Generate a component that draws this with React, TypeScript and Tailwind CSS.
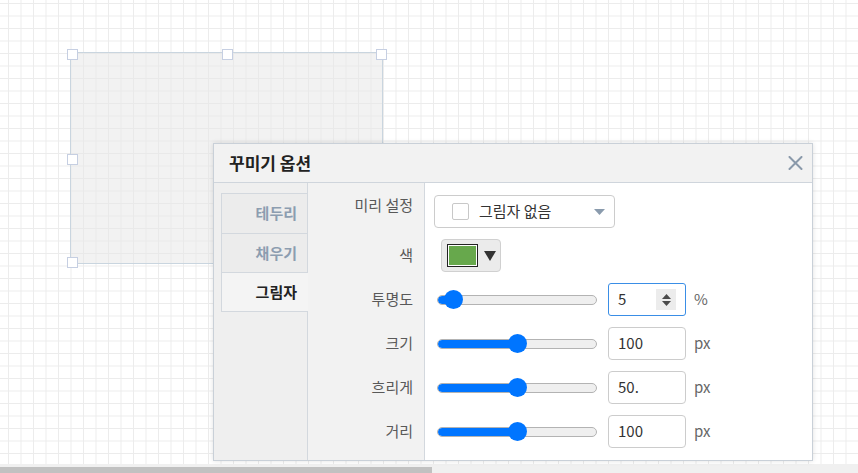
import React from "react";

const FONT = "font-['Noto_Sans_CJK_KR','Noto_Sans',sans-serif]";

function Slider({ pos }: { pos: number }) {
  return (
    <div className="relative ml-[12px] h-[33px] w-[160px] flex items-center">
      <div className="relative h-[10px] w-full rounded-full border border-[#b3b3b3] bg-[#efefef] overflow-hidden">
        <div className="h-full rounded-l-full bg-[#0075ff]" style={{ width: pos }} />
      </div>
      <div
        className="absolute top-[7px] h-[19px] w-[19px] rounded-full bg-[#0075ff]"
        style={{ left: pos - 9.5 }}
      />
    </div>
  );
}

function NumInput({ value, unit, focused }: { value: string; unit: string; focused?: boolean }) {
  return (
    <div className="flex items-center">
      <div
        className={
          focused
            ? "ml-[11px] flex h-[33px] w-[78px] items-center rounded-[3px] border border-[#3a8ee6] pl-[9px] pr-[9px]"
            : "ml-[11px] flex h-[33px] w-[78px] items-center rounded-[4px] border border-[#cccccc] pl-[9px] pr-[9px]"
        }
      >
        <span className="text-[15px] text-[#333]">{value}</span>
        {focused && (
          <div className="ml-auto flex h-[21px] w-[20px] flex-col items-center justify-center gap-[2px] bg-[#ececec]">
            <svg width="9" height="5" viewBox="0 0 9 5">
              <polygon points="0,5 4.5,0 9,5" fill="#4a4a4a" />
            </svg>
            <svg width="9" height="5" viewBox="0 0 9 5">
              <polygon points="0,0 9,0 4.5,5" fill="#4a4a4a" />
            </svg>
          </div>
        )}
      </div>
      <span className="ml-[8px] text-[15px] text-[#666]">{unit}</span>
    </div>
  );
}

export default function App() {
  const labels = ["미리 설정", "색", "투명도", "크기", "흐리게", "거리"];
  return (
    <div
      className={`${FONT} relative flex h-[473px] w-[858px] flex-col overflow-hidden bg-white`}
    >
      <div className="relative flex-1 [background-image:linear-gradient(to_right,#ececec_1px,transparent_1px),linear-gradient(to_bottom,#ececec_1px,transparent_1px)] [background-size:12.5px_12.5px] [background-position:8px_3px]">
        {/* shape */}
        <div className="absolute left-[70px] top-[52px] h-[212px] w-[313px] border border-[#c9d5df] bg-[rgba(232,232,232,0.55)]" />
        {[
          [72, 54],
          [227, 54],
          [381, 54],
          [72, 159],
          [72, 262],
        ].map(([x, y], i) => (
          <div
            key={i}
            className="absolute h-[11px] w-[11px] border border-[#c6cfe2] bg-white"
            style={{ left: x - 5.5, top: y - 5.5 }}
          />
        ))}

        {/* dialog */}
        <div className="absolute left-[213px] top-[143px] flex h-[318px] w-[600px] flex-col border border-[#c9d0d8] bg-white shadow-[0_0_5px_rgba(0,0,0,0.12)]">
          <div className="flex h-[39px] shrink-0 items-center border-b border-[#cfd5dc] bg-[#f2f2f2] pl-[15px] pr-[9px]">
            <span className="text-[17px] font-bold text-[#222]">꾸미기 옵션</span>
            <svg className="ml-auto" width="15" height="14" viewBox="0 0 15 14">
              <path d="M1.5 1 L13.5 13 M13.5 1 L1.5 13" stroke="#8a99aa" strokeWidth="2" strokeLinecap="round" />
            </svg>
          </div>
          <div className="flex flex-1">
            {/* tabs */}
            <div className="w-[93px] shrink-0 bg-[#efefef] pl-[7px] pt-[10px]">
              <div className="flex h-[40px] w-[86px] items-center justify-end border-l border-t border-[#d3d8de] bg-[#ececec] pr-[10px] text-[15px] font-bold text-[#8c9db0]">
                테두리
              </div>
              <div className="flex h-[39px] w-[86px] items-center justify-end border-l border-t border-[#d3d8de] bg-[#ececec] pr-[10px] text-[15px] font-bold text-[#8c9db0]">
                채우기
              </div>
              <div className="relative z-10 flex h-[40px] w-[87px] items-center justify-end border-b border-l border-t border-[#d3d8de] bg-[#f4f4f4] pr-[11px] text-[15px] font-bold text-[#222]">
                그림자
              </div>
            </div>
            {/* labels */}
            <div className="flex w-[118px] shrink-0 flex-col gap-[11px] border-l border-r border-[#d3d8de] bg-[#f2f2f2] pr-[11px] pt-[12px]">
              {labels.map((l, i) => (
                <div
                  key={l}
                  className={
                    i === 0
                      ? "flex h-[33px] items-start justify-end text-[15px] leading-[20px] text-[#595959]"
                      : "flex h-[33px] items-center justify-end text-[15px] text-[#595959]"
                  }
                >
                  {l}
                </div>
              ))}
            </div>
            {/* controls */}
            <div className="flex flex-1 flex-col gap-[11px] pt-[12px]">
              <div className="flex h-[33px]">
                <div className="ml-[9px] flex h-[33px] w-[181px] items-center rounded-[4px] border border-[#cccccc] pl-[17px] pr-[9px]">
                  <div className="h-[17px] w-[17px] rounded-[2px] border border-[#c8c8c8] bg-white" />
                  <span className="ml-[10px] text-[15px] text-[#333]">그림자 없음</span>
                  <svg className="ml-auto" width="11" height="6" viewBox="0 0 11 6">
                    <polygon points="0,0 11,0 5.5,6" fill="#8a9bad" />
                  </svg>
                </div>
              </div>
              <div className="flex h-[33px]">
                <div className="ml-[16px] flex h-[33px] w-[60px] items-center rounded-[4px] border border-[#d0d0d0] bg-[#ebebeb] pl-[5px]">
                  <div className="h-[23px] w-[31px] border border-[#222]">
                    <div className="h-full w-full border border-white bg-[#67a84c]" />
                  </div>
                  <svg className="ml-[6px]" width="12" height="10" viewBox="0 0 12 10">
                    <polygon points="0,0 12,0 6,10" fill="#333" />
                  </svg>
                </div>
              </div>
              <div className="flex h-[33px] items-center">
                <Slider pos={16} />
                <NumInput value="5" unit="%" focused />
              </div>
              <div className="flex h-[33px] items-center">
                <Slider pos={80} />
                <NumInput value="100" unit="px" />
              </div>
              <div className="flex h-[33px] items-center">
                <Slider pos={80} />
                <NumInput value="50." unit="px" />
              </div>
              <div className="flex h-[33px] items-center">
                <Slider pos={80} />
                <NumInput value="100" unit="px" />
              </div>
            </div>
          </div>
        </div>
      </div>
      {/* scrollbar */}
      <div className="h-[9px] shrink-0 bg-[#f0f0f0] pt-[3px]">
        <div className="h-[6px] w-[432px] bg-[#c1c1c1]" />
      </div>
    </div>
  );
}
